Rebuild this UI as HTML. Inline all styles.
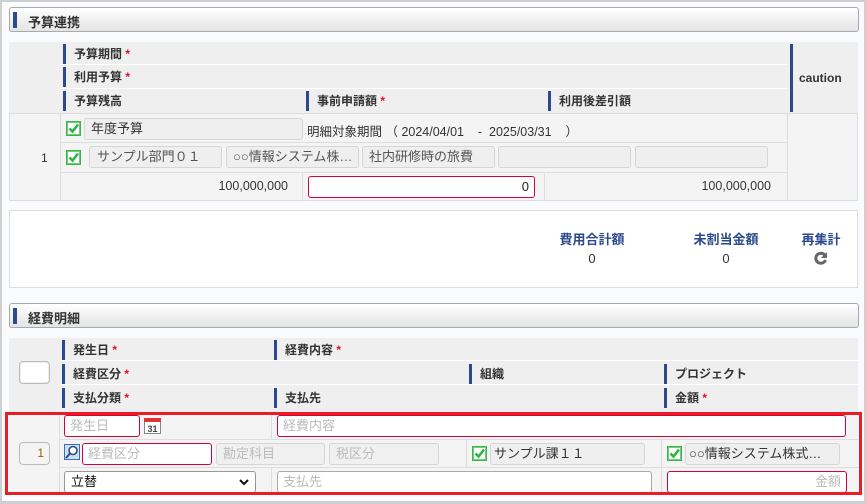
<!DOCTYPE html>
<html><head><meta charset="utf-8"><style>
*{box-sizing:border-box;margin:0;padding:0}
body{width:866px;height:504px;position:relative;background:#fafbfe;font-family:"Liberation Sans","Noto Sans CJK JP",sans-serif;font-size:12px;color:#333;overflow:hidden}
.a{position:absolute}
.frame{left:0;top:0;width:866px;height:504px;border:2px solid #cfcfcf;border-bottom-width:3px}
.bar{left:9px;width:850px;height:25px;border:1px solid #aaa;border-radius:3px;background:linear-gradient(#fff,#e4e4e4)}
.bar i{position:absolute;left:3px;top:4px;width:4px;height:16px;background:#2b4a8b}
.bar b{position:absolute;left:18px;top:4px;font-size:13px;color:#333}
.hd{background:#efefef}
.hl{font-weight:bold;font-size:12px;border-left:3px solid #2b4a8b;padding-left:8px;height:20px;line-height:20px}
.req:after{content:" *";color:#e0102a}
.body{background:#f4f4f4}
.box{border:1px solid #d6d6d6;border-radius:3px;background:#efefef;height:22px;line-height:20px;padding-left:6px;font-size:13px;white-space:nowrap;overflow:hidden}
.in{border:1px solid #d6003c;border-radius:3px;background:#fff;height:22px;line-height:20px;padding:0 5px;font-size:13px;color:#bbb}
.cb{width:15px;height:15px;border:1px solid #3bb44a;background:#fff;box-shadow:inset 0 0 0 1px #6fd07a}
.cb svg{position:absolute;left:0px;top:0px}
.vl{width:1px;background:#ddd}
.hr{height:1px;background:#ddd}
</style></head><body>
<div class="a frame"></div>

<div class="a bar" style="top:7px"><i></i><b>予算連携</b></div>

<div class="a hd" style="left:9px;top:42px;width:849px;height:71px"></div>
<div class="a" style="left:60px;top:64px;width:727px;height:1px;background:#fff"></div>
<div class="a" style="left:60px;top:88px;width:727px;height:1px;background:#fff"></div>
<div class="a hl req" style="left:63px;top:44px">予算期間</div>
<div class="a hl req" style="left:63px;top:67px">利用予算</div>
<div class="a hl" style="left:63px;top:91px">予算残高</div>
<div class="a hl req" style="left:306px;top:91px">事前申請額</div>
<div class="a hl" style="left:548px;top:91px">利用後差引額</div>
<div class="a hl" style="left:790px;top:44px;height:68px;line-height:68px;padding-left:6px">caution</div>
<div class="a body" style="left:9px;top:113px;width:849px;height:88px;border:1px solid #ddd"></div>
<div class="a vl" style="left:60px;top:114px;height:86px"></div>
<div class="a vl" style="left:787px;top:114px;height:86px"></div>
<div class="a hr" style="left:60px;top:142px;width:727px"></div>
<div class="a hr" style="left:60px;top:172px;width:727px"></div>
<div class="a vl" style="left:302px;top:173px;height:27px"></div>
<div class="a vl" style="left:544px;top:173px;height:27px"></div>
<div class="a" style="left:41px;top:151px;font-size:12px">1</div>
<div class="a cb" style="left:66px;top:121px"><svg width="13" height="13" viewBox="0 0 13 13"><path d="M2.5 6.5l3 3 5.5-7" stroke="#2fb544" stroke-width="2.6" fill="none"/></svg></div>
<div class="a box" style="left:84px;top:118px;width:219px">年度予算</div>
<div class="a" style="left:307px;top:121px;font-size:12.5px;white-space:pre">明細対象期間 （ 2024/04/01    -  2025/03/31    ）</div>
<div class="a cb" style="left:66px;top:150px"><svg width="13" height="13" viewBox="0 0 13 13"><path d="M2.5 6.5l3 3 5.5-7" stroke="#2fb544" stroke-width="2.6" fill="none"/></svg></div>
<div class="a box" style="left:89px;top:146px;width:133px;padding-left:7px;color:#555">サンプル部門０１</div>
<div class="a box" style="left:226px;top:146px;width:133px;color:#555">○○情報システム株…</div>
<div class="a box" style="left:362px;top:146px;width:133px;color:#555">社内研修時の旅費</div>
<div class="a box" style="left:498px;top:146px;width:133px"></div>
<div class="a box" style="left:635px;top:146px;width:133px"></div>
<div class="a" style="left:180px;top:179px;width:108px;text-align:right;font-size:12.5px">100,000,000</div>
<div class="a in" style="left:308px;top:176px;width:227px;text-align:right;color:#222">0</div>
<div class="a" style="left:660px;top:179px;width:111px;text-align:right;font-size:12.5px">100,000,000</div>

<div class="a" style="left:9px;top:210px;width:849px;height:78px;background:#fff;border:1px solid #ddd"></div>
<div class="a" style="left:542px;top:229px;width:100px;text-align:center;font-weight:bold;font-size:13px;color:#2b4a8b">費用合計額</div>
<div class="a" style="left:542px;top:251px;width:100px;text-align:center;font-size:13px">0</div>
<div class="a" style="left:676px;top:229px;width:100px;text-align:center;font-weight:bold;font-size:13px;color:#2b4a8b">未割当金額</div>
<div class="a" style="left:676px;top:251px;width:100px;text-align:center;font-size:13px">0</div>
<div class="a" style="left:791px;top:229px;width:60px;text-align:center;font-weight:bold;font-size:13px;color:#2b4a8b">再集計</div>
<svg class="a" style="left:814px;top:251px" width="14" height="14" viewBox="0 0 14 14"><path d="M11 4.5A5 5 0 1 0 11.5 9" stroke="#666" stroke-width="3" fill="none"/><path d="M13 1v6H7z" fill="#666"/></svg>

<div class="a bar" style="top:303px"><i></i><b>経費明細</b></div>

<div class="a hd" style="left:9px;top:338px;width:849px;height:75px"></div>
<div class="a" style="left:60px;top:360px;width:798px;height:1px;background:#fff"></div>
<div class="a" style="left:60px;top:384px;width:798px;height:1px;background:#fff"></div>
<div class="a" style="left:19px;top:361px;width:31px;height:23px;border:1px solid #bbb;border-radius:4px;background:#fff;box-shadow:inset 0 0 0 1px #eee"></div>
<div class="a hl req" style="left:62px;top:340px">発生日</div>
<div class="a hl req" style="left:274px;top:340px">経費内容</div>
<div class="a hl req" style="left:62px;top:364px">経費区分</div>
<div class="a hl" style="left:469px;top:364px">組織</div>
<div class="a hl" style="left:664px;top:364px">プロジェクト</div>
<div class="a hl req" style="left:62px;top:388px">支払分類</div>
<div class="a hl" style="left:274px;top:388px">支払先</div>
<div class="a hl req" style="left:664px;top:388px">金額</div>
<div class="a body" style="left:9px;top:413px;width:849px;height:80px"></div>
<div class="a vl" style="left:59px;top:413px;height:80px"></div>
<div class="a hr" style="left:59px;top:439px;width:799px"></div>
<div class="a hr" style="left:59px;top:467px;width:799px"></div>
<div class="a vl" style="left:271px;top:413px;height:26px"></div>
<div class="a vl" style="left:271px;top:467px;height:26px"></div>
<div class="a vl" style="left:466px;top:439px;height:28px"></div>
<div class="a vl" style="left:661px;top:439px;height:54px"></div>
<div class="a" style="left:19px;top:442px;width:31px;height:23px;border:1px solid #bbb;border-radius:4px;background:#f4f4f4;text-align:right;padding-right:5px;line-height:21px;color:#a05a00">1</div>
<div class="a in" style="left:64px;top:415px;width:76px">発生日</div>
<svg class="a" style="left:144px;top:416px" width="17" height="18" viewBox="0 0 17 18"><rect x="0.5" y="2.5" width="16" height="15" fill="#fff" stroke="#888"/><rect x="0" y="2" width="17" height="4" fill="#d33"/><text x="8.5" y="16" font-size="9" font-weight="bold" text-anchor="middle" fill="#444" font-family="Liberation Sans">31</text></svg>
<div class="a in" style="left:277px;top:415px;width:569px">経費内容</div>
<svg class="a" style="left:64px;top:444px" width="16" height="16" viewBox="0 0 16 16"><rect x="0.5" y="0.5" width="15" height="15" fill="#cfe0f5" stroke="#3a6fb3"/><circle cx="9" cy="6.5" r="4" fill="#fff" stroke="#2b4a8b" stroke-width="1.6"/><path d="M6 9.5L2 14" stroke="#2b4a8b" stroke-width="2"/></svg>
<div class="a in" style="left:82px;top:443px;width:130px">経費区分</div>
<div class="a box" style="left:216px;top:443px;width:109px;color:#bbb;background:#f0f0f0">勘定科目</div>
<div class="a box" style="left:329px;top:443px;width:110px;color:#bbb;background:#f0f0f0">税区分</div>
<div class="a cb" style="left:472px;top:446px"><svg width="13" height="13" viewBox="0 0 13 13"><path d="M2.5 6.5l3 3 5.5-7" stroke="#2fb544" stroke-width="2.6" fill="none"/></svg></div>
<div class="a box" style="left:490px;top:443px;width:155px;padding-left:3px;color:#333">サンプル課１１</div>
<div class="a cb" style="left:667px;top:446px"><svg width="13" height="13" viewBox="0 0 13 13"><path d="M2.5 6.5l3 3 5.5-7" stroke="#2fb544" stroke-width="2.6" fill="none"/></svg></div>
<div class="a box" style="left:685px;top:443px;width:155px;padding-left:3px;color:#333">○○情報システム株式…</div>
<div class="a" style="left:64px;top:471px;width:192px;height:22px;border:1px solid #999;border-radius:3px;background:#fff;font-size:13px;line-height:20px;padding-left:6px;color:#111">立替<svg style="position:absolute;right:6px;top:7px" width="10" height="7" viewBox="0 0 10 7"><path d="M1 1l4 4 4-4" stroke="#111" stroke-width="2" fill="none"/></svg></div>
<div class="a in" style="left:277px;top:471px;width:375px;border-color:#aaa">支払先</div>
<div class="a in" style="left:667px;top:471px;width:180px;text-align:right">金額</div>
<div class="a" style="left:5px;top:412px;width:857px;height:83px;border:3px solid #ec1c24"></div>
</body></html>
